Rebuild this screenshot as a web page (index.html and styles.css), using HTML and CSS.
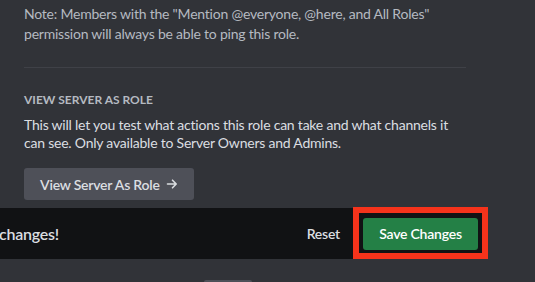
FILE: index.html
```html
<!DOCTYPE html>
<html lang="en">
<head>
    <meta charset="UTF-8">
    <meta name="viewport" content="width=device-width, initial-scale=1.0">
    <title>Role Settings</title>
    <link rel="stylesheet" href="styles.css">
</head>
<body>
    <div class="settings">
        <p class="note">
            Note: Members with the "Mention @everyone, @here, and All Roles"
            permission will always be able to ping this role.
        </p>

        <div class="divider"></div>

        <!-- View server as role -->
        <h2 class="section-title">View Server As Role</h2>
        <p class="section-desc">
            This will let you test what actions this role can take and what channels it
            can see. Only available to Server Owners and Admins.
        </p>
        <button class="view-btn">
            View Server As Role
            <svg class="arrow" width="12" height="12" viewBox="0 0 12 12" fill="none">
                <path d="M1.5 6h8.5M6.5 2.2 10.2 6 6.5 9.8" stroke="currentColor" stroke-width="1.6" stroke-linecap="round" stroke-linejoin="round"/>
            </svg>
        </button>
    </div>

    <!-- Barra de cambios sin guardar -->
    <div class="notice-bar">
        <div class="notice-text"><span>Careful — you have unsaved changes!</span></div>
        <button class="reset-btn">Reset</button>
        <button class="save-btn">Save Changes</button>
        <div class="highlight"></div>
    </div>

    <div class="scroll-stub"></div>
</body>
</html>
```

FILE: styles.css
```css
body {
    margin: 0;
    height: 282px;
    background: #313338;
    font-family: 'Lato', 'Noto Sans', sans-serif;
    letter-spacing: -0.22px;
    overflow: hidden;
}

.settings {
    width: 442px;
    padding: 4px 0 0 24px;
}

.note {
    margin: 0;
    font-size: 14px;
    line-height: 20px;
    color: #b5bac1;
}

.divider {
    height: 1px;
    margin: 23px 0 24px;
    background: #3f4147;
}

.section-title {
    margin: 0;
    font-size: 12px;
    line-height: 16px;
    font-weight: 700;
    text-transform: uppercase;
    letter-spacing: 0;
    color: #b5bac1;
}

.section-desc {
    margin: 8px 0 16px;
    font-size: 14px;
    line-height: 18px;
    color: #dbdee1;
}

button {
    font-family: inherit;
    letter-spacing: inherit;
    border: none;
    cursor: pointer;
}

.view-btn {
    display: flex;
    align-items: center;
    gap: 6px;
    height: 32px;
    padding: 0 16px;
    border-radius: 3px;
    background: #4e5058;
    color: #dbdee1;
    font-size: 14px;
    font-weight: 600;
}

/* Barra inferior */
.notice-bar {
    position: relative;
    display: flex;
    align-items: center;
    width: 483px;
    height: 51px;
    margin-top: 8px;
    background: #111214;
}

.notice-text {
    flex: 0 0 59px;
    min-width: 0;
    display: flex;
    justify-content: flex-end;
    white-space: nowrap;
    font-size: 16px;
    font-weight: 600;
    color: #dbdee1;
}

.reset-btn {
    margin-left: auto;
    padding: 0;
    background: none;
    color: #dbdee1;
    font-size: 14px;
    font-weight: 600;
}

.save-btn {
    width: 115px;
    height: 32px;
    margin: 0 5px 0 23px;
    border-radius: 3px;
    background: #248046;
    color: #ffffff;
    font-size: 14px;
    font-weight: 600;
}

/* Recuadro rojo de anotación */
.highlight {
    position: absolute;
    left: 353px;
    top: -1px;
    width: 135px;
    height: 52px;
    box-sizing: border-box;
    border: 6px solid #f5331b;
}

.scroll-stub {
    width: 48px;
    height: 4px;
    margin: 21px 0 0 204px;
    border-radius: 2px;
    background: #4e5058;
}
```
